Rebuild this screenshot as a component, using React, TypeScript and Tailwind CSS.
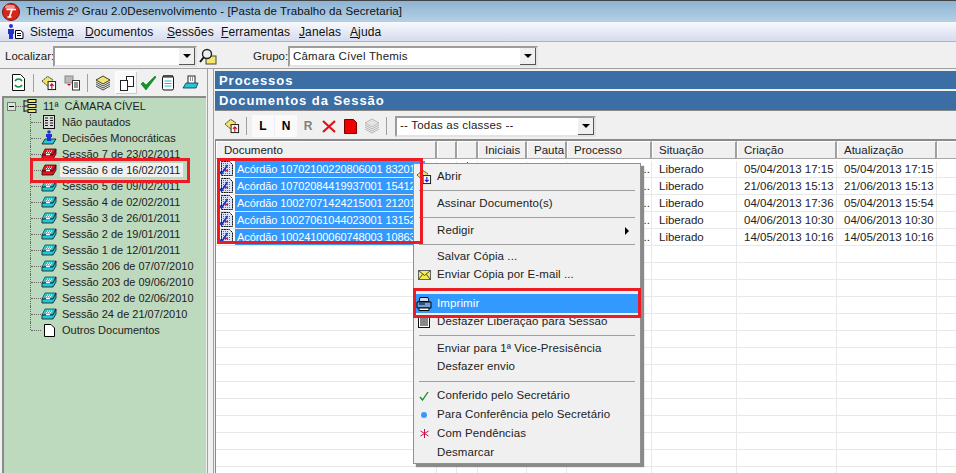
import React from 'react';

const treeFont = "font-['Liberation_Sans',sans-serif]";

function TitleLogo() {
  return (
    <svg width="18" height="18" viewBox="0 0 18 18">
      <circle cx="9" cy="9" r="8.500" fill="#d8261c" stroke="#7a1510" />
      <ellipse cx="8" cy="4" rx="5" ry="2.200" fill="#f2908a" />
      <path d="M4.500 6.500h9.500M10 6.500L7.500 14M5.500 14h4" stroke="#fff" strokeWidth="1.700" fill="none" />
    </svg>
  );
}

function MenuIcon() {
  return (
    <svg width="17" height="15" viewBox="0 0 17 15">
      <circle cx="4" cy="2" r="2" fill="#2233cc" />
      <path d="M1 5h6v5H6v5H2v-5H1z" fill="#2233cc" />
      <path d="M8.500 6.500h5l2.500 2v6h-7.500z" fill="#fff" stroke="#000" />
      <path d="M10 9.500h4M10 11.500h4" stroke="#000" />
    </svg>
  );
}

function Search() {
  return (
    <svg width="18" height="17" viewBox="0 0 18 17">
      <rect x="7" y="8" width="10" height="8" fill="#f5e66a" stroke="#444" />
      <circle cx="8" cy="6" r="4.500" fill="#eee" stroke="#222" strokeWidth="1.400" />
      <path d="M5 9L1 14" stroke="#111" strokeWidth="2" />
    </svg>
  );
}

function Tray({ red }: { red?: boolean }) {
  const top = red ? '#e8131c' : '#23c8d8';
  return (
    <svg width="16" height="12" viewBox="0 0 16 12">
      <path d="M4 1h11l-3 6H1z" fill={top} stroke={red ? '#700' : '#06565f'} strokeWidth="0.800" />
      <path d="M1 7h11l3-6v5l-3 5H1z" fill={top} stroke="#111" strokeWidth="0.800" />
      <path d="M5 6.500h4" stroke="#fff" strokeWidth="1.500" />
      <path d="M6 3h6M5 4.500h6" stroke="#fff" strokeDasharray="1 1" />
    </svg>
  );
}

function TreeIcon({ kind }: { kind: string }) {
  if (kind === 'list') {
    return (
      <svg width="14" height="14" viewBox="0 0 14 14">
        <rect x="1.500" y="0.500" width="11" height="13" fill="#ddd" stroke="#111" />
        <path d="M3 3h3M3 5.500h3M3 8h3M3 10.500h3M8 3h3M8 5.500h3M8 8h3M8 10.500h3" stroke="#111" strokeWidth="1.200" />
      </svg>
    );
  }
  if (kind === 'blue') {
    return (
      <svg width="16" height="16" viewBox="0 0 16 16">
        <circle cx="8" cy="2" r="1.800" fill="#2233cc" />
        <path d="M5 4h6v3H5z" fill="#2233cc" />
        <path d="M4 9h11l-3 5H1z" fill="#23c8d8" stroke="#111" strokeWidth="0.800" />
        <path d="M6 7h4v4H6z" fill="#2233cc" />
      </svg>
    );
  }
  if (kind === 'page') {
    return (
      <svg width="11" height="13" viewBox="0 0 11 13">
        <path d="M0.500 0.500h6.500l3.500 3.500v8.500h-10z" fill="#fff" stroke="#000" />
      </svg>
    );
  }
  return <Tray red={kind === 'red'} />;
}

function Stack() {
  return (
    <svg width="16" height="16" viewBox="0 0 16 16">
      <path d="M8 1l7 4-7 4-7-4z" fill="#f4e46a" stroke="#111" strokeWidth="0.800" />
      <path d="M1 7l7 4 7-4M1 9l7 4 7-4M1 11l7 4 7-4" fill="none" stroke="#333" strokeWidth="0.900" />
    </svg>
  );
}

function FolderUp({ down }: { down?: boolean }) {
  return (
    <svg width="16" height="16" viewBox="0 0 17 16">
      <path d="M1 6l6-5 5 3v3l-4 5z" fill="#f4e46a" stroke="#111" strokeWidth="0.800" strokeDasharray="2 0.500" />
      <rect x="7.500" y="6.500" width="8" height="8.500" fill="#fff" stroke="#111" />
      {down ? (
        <path d="M11.500 8v5M9.500 11l2 2 2-2" stroke="#1a2be0" strokeWidth="1.300" fill="none" />
      ) : (
        <path d="M11.500 14V9M9.500 11l2-2 2 2" stroke="#d01018" strokeWidth="1.300" fill="none" />
      )}
    </svg>
  );
}

function LeftToolbar() {
  return (
    <div className="h-[27px] flex items-center pl-[11px]">
      <svg width="15" height="17" viewBox="0 0 15 17">
        <path d="M1.500 0.500h8l4 4v12h-12z" fill="#fff" stroke="#111" />
        <path d="M4 7a4 4 0 0 1 7 0M11 11a4 4 0 0 1-7 0" stroke="#11913a" strokeWidth="1.600" fill="none" />
      </svg>
      <div className="w-px h-[18px] bg-[#a0a0a0] ml-[7px] mr-[7px]" />
      <FolderUp />
      <div className="w-[7px]" />
      <svg width="17" height="16" viewBox="0 0 17 16">
        <rect x="1" y="1" width="8" height="7" fill="#bbb" stroke="#888" />
        <path d="M3 9l2 2 2-2" fill="#d01018" />
        <rect x="8.500" y="5.500" width="7" height="9.500" fill="#fff" stroke="#333" />
        <path d="M10 8h4M10 10h4M10 12h4" stroke="#333" />
      </svg>
      <div className="w-px h-[18px] bg-[#a0a0a0] ml-[6px] mr-[7px]" />
      <Stack />
      <div className="w-[22px] h-[23px] ml-[4px] flex items-center justify-center bg-[#fafafa] border-t border-l border-white shadow-[inset_-1px_-1px_0_#ccc]">
        <svg width="14" height="15" viewBox="0 0 14 15">
          <rect x="6.500" y="0.500" width="7" height="10" fill="#fff" stroke="#222" />
          <rect x="0.500" y="4.500" width="7" height="10" fill="#fff" stroke="#222" />
        </svg>
      </div>
      <svg className="ml-[3px]" width="17" height="16" viewBox="0 0 17 16">
        <path d="M1 9l5 6L16 2l-1-1-9 9-3-3z" fill="#0c9a22" stroke="#056012" strokeWidth="0.500" />
      </svg>
      <svg className="ml-[4px]" width="14" height="17" viewBox="0 0 14 17">
        <rect x="1.500" y="2" width="11" height="14" rx="1.500" fill="#fff" stroke="#111" />
        <path d="M3 1v3M5 1v3M7 1v3M9 1v3M11 1v3" stroke="#111" />
        <path d="M3.500 7h7M3.500 9.500h7M3.500 12h7" stroke="#22b8d0" />
      </svg>
      <svg className="ml-[7px]" width="17" height="16" viewBox="0 0 17 16">
        <rect x="6" y="1" width="7" height="8" fill="#fff" stroke="#223" />
        <path d="M8 3h1M10 3h1M8 5h1M10 5h1" stroke="#223" />
        <path d="M4 8h12l-2 5H1z" fill="#23c8d8" stroke="#06353f" strokeWidth="0.800" />
      </svg>
    </div>
  );
}

const sessions = [
  ['Sessão 5 de 09/02/2011', 'tray'],
  ['Sessão 4 de 02/02/2011', 'tray'],
  ['Sessão 3 de 26/01/2011', 'tray'],
  ['Sessão 2 de 19/01/2011', 'tray'],
  ['Sessão 1 de 12/01/2011', 'tray'],
  ['Sessão 206 de 07/07/2010', 'tray'],
  ['Sessão 203 de 09/06/2010', 'tray'],
  ['Sessão 202 de 02/06/2010', 'tray'],
  ['Sessão 24 de 21/07/2010', 'tray'],
  ['Outros Documentos', 'page'],
];

function TreeRow({ label, kind, selected, last }: { label: string; kind: string; selected?: boolean; last?: boolean }) {
  return (
    <div className="h-[16px] flex items-center relative">
      <div className={`absolute left-[26px] top-0 w-0 border-l border-dotted border-[#666] ${last ? 'h-[8px]' : 'h-[16px]'}`} />
      <div className="w-[10px] ml-[27px] border-t border-dotted border-[#666]" />
      <div className="w-[16px] flex justify-center">
        <TreeIcon kind={kind} />
      </div>
      <span className={`ml-[3px] pl-[2px] pr-[3px] whitespace-nowrap h-[14px] leading-[14px] ${selected ? 'bg-[#f0f0f0]' : ''}`}>{label}</span>
    </div>
  );
}

function Tree() {
  return (
    <div className={`flex-1 ml-[2px] mr-[1px] border-l-2 border-t-2 border-[#8a8a8a] bg-[#bedabe] text-[11px] text-[#222] ${treeFont}`}>
      <div className="h-[16px] flex items-center relative">
        <div className="ml-[3px] w-[9px] h-[9px] border border-[#777] bg-[#d8e8d8] flex items-center justify-center">
          <div className="w-[5px] h-px bg-black" />
        </div>
        <div className="w-[7px] border-t border-dotted border-[#666]" />
        <svg width="14" height="14" viewBox="0 0 14 14">
          <path d="M1 1v12M1 2h5M1 7h5M1 12h5" stroke="#111" />
          <rect x="5" y="0.500" width="8" height="3" fill="#f4e46a" stroke="#111" />
          <rect x="5" y="5.500" width="8" height="3" fill="#f4e46a" stroke="#111" />
          <rect x="5" y="10.500" width="8" height="3" fill="#f4e46a" stroke="#111" />
        </svg>
        <span className="ml-[6px] whitespace-nowrap">11ª&nbsp; CÂMARA CÍVEL</span>
      </div>
      <TreeRow label="Não pautados" kind="list" />
      <TreeRow label="Decisões Monocráticas" kind="blue" />
      <TreeRow label="Sessão 7 de 23/02/2011" kind="red" />
      <TreeRow label="Sessão 6 de 16/02/2011" kind="red" selected />
      {sessions.map(([label, kind], i) => (
        <TreeRow key={label} label={label} kind={kind} last={i === sessions.length - 1} />
      ))}
    </div>
  );
}

const columns = [
  { name: 'Documento', w: 'w-[221px]' },
  { name: '', w: 'w-[20px]' },
  { name: '', w: 'w-[21px]' },
  { name: 'Iniciais', w: 'w-[49px]' },
  { name: 'Pauta', w: 'w-[40px]' },
  { name: 'Processo', w: 'w-[85px]' },
  { name: 'Situação', w: 'w-[85px]' },
  { name: 'Criação', w: 'w-[100px]' },
  { name: 'Atualização', w: 'w-[100px]' },
  { name: '', w: 'w-[21px]' },
];

const rows = [
  ['Acórdão 10702100220806001 832012', 'Liberado', '05/04/2013 17:15', '05/04/2013 17:15'],
  ['Acórdão 10702084419937001 154123', 'Liberado', '21/06/2013 15:13', '21/06/2013 15:13'],
  ['Acórdão 10027071424215001 212012', 'Liberado', '04/04/2013 17:36', '05/04/2013 15:54'],
  ['Acórdão 10027061044023001 131523', 'Liberado', '04/06/2013 10:30', '04/06/2013 10:30'],
  ['Acórdão 10024100060748003 108632', 'Liberado', '14/05/2013 10:16', '14/05/2013 10:16'],
];

function DocIcon() {
  return (
    <svg width="16" height="16" viewBox="0 0 16 16" className="shrink-0">
      <path d="M3.500 0.500h8l3 3v11h-11z" fill="#dbe6f8" stroke="#111" strokeDasharray="2 0.500" />
      <path d="M5 2.500h6M5 4.500h8M5 6.500h8M5 8.500h8M5 10.500h8M5 12.500h8" stroke="#3a6fd8" strokeDasharray="1 1" />
      <path d="M0.500 9l3 4 6-9" stroke="#1530b8" strokeWidth="1.600" fill="none" />
      <path d="M7 9l3 1" stroke="#d01040" strokeWidth="1.500" />
    </svg>
  );
}

function DocTable() {
  return (
    <div className="flex-1 overflow-hidden border-t-2 border-l border-[#8a8a8a] bg-white text-[11.500px] text-[#222] ml-px">
      <div className="flex h-[18px] bg-[#f0f0f0] border-b border-[#a8a8a8]">
        {columns.map((c, i) => (
          <div
            key={i}
            className={`${c.w} shrink-0 ${i === 0 ? 'pl-[7px]' : 'pl-[6px]'} leading-[17px] border-t border-l border-white border-r-2 border-r-[#a0a0a0] whitespace-nowrap overflow-hidden`}
          >
            {c.name}
          </div>
        ))}
      </div>
      <div className="h-[2px]" />
      {Array.from({ length: 19 }).map((_, r) => {
        const row = rows[r];
        return (
          <div key={r} className="flex h-[17px] border-b border-[#e8e8e8]">
            {columns.map((c, i) => (
              <div key={i} className={`${c.w} shrink-0 border-r border-[#e8e8e8] leading-[17px] whitespace-nowrap overflow-hidden ${i > 5 ? 'pl-[7px]' : ''}`}>
                {row && i === 0 && (
                  <div className="flex items-center pl-[2px]">
                    <DocIcon />
                    <span className="ml-[1px] pl-[2px] w-[190px] h-[16px] overflow-hidden bg-[#3399ff] text-white text-[11px] tracking-[-0.1px] leading-[16px]">{row[0]}</span>
                  </div>
                )}
                {row && r === 0 && i === 2 && (
                  <div className="flex justify-center pt-[1px]">
                    <svg width="9" height="9" viewBox="0 0 9 9">
                      <path d="M4.500 0.500L8 8H1z" fill="#f4e46a" stroke="#222" />
                    </svg>
                  </div>
                )}
                {row && i === 5 && <div className="text-right pr-[1px]">...</div>}
                {row && i === 6 && row[1]}
                {row && i === 7 && row[2]}
                {row && i === 8 && row[3]}
              </div>
            ))}
          </div>
        );
      })}
    </div>
  );
}

function MenuLine({ icon, label, hi, arrow, h = 'h-[19px]' }: { icon?: React.ReactNode; label: string; hi?: boolean; arrow?: boolean; h?: string }) {
  return (
    <div className={`flex items-center ${h} ${hi ? 'bg-[#3399ff] text-white' : 'text-[#222]'}`}>
      <div className="w-[21px] pr-[5px] shrink-0 flex justify-center">{icon}</div>
      <span className="tracking-[0.1px] whitespace-nowrap">{label}</span>
      {arrow && <div className="ml-auto mr-[9px] w-0 h-0 border-y-[4px] border-y-transparent border-l-[4px] border-l-black" />}
    </div>
  );
}

function Sep({ h = 'h-[8px]' }: { h?: string }) {
  return (
    <div className={`${h} flex items-center px-[3px]`}>
      <div className="h-px w-full bg-[#a0a0a0]" />
    </div>
  );
}

function ContextMenu() {
  return (
    <div className="absolute left-[413px] top-[163px] w-[228px] h-[301px] bg-[#f0f0f0] border border-[#909090] shadow-[3px_3px_1px_#8a8a8a] text-[11.500px] pt-[3px] px-[2px]">
      <MenuLine icon={<FolderUp down />} label="Abrir" />
      <Sep />
      <MenuLine label="Assinar Documento(s)" />
      <Sep />
      <MenuLine label="Redigir" arrow />
      <Sep />
      <MenuLine label="Salvar Cópia ..." h="h-[18px]" />
      <MenuLine
        h="h-[18px]"
        label="Enviar Cópia por E-mail ..."
        icon={
          <svg width="13" height="10" viewBox="0 0 13 10">
            <rect x="0.500" y="0.500" width="12" height="9" fill="#f4ec50" stroke="#666" />
            <path d="M0.500 0.500l6 5 6-5M0.500 9.500l4-5M12.500 9.500l-4-5" stroke="#444" fill="none" />
          </svg>
        }
      />
      <Sep h="h-[10px]" />
      <MenuLine
        hi
        label="Imprimir"
        icon={
          <svg width="16" height="14" viewBox="0 0 16 14" className="shrink-0">
            <path d="M4 0.500h8l1 4H3z" fill="#cfe2f8" stroke="#000" />
            <path d="M1 5h14v6H1z" fill="#6f9fd8" stroke="#000" />
            <path d="M3 11h10v2.500H3z" fill="#fff" stroke="#000" />
            <path d="M3 7h6" stroke="#000" />
          </svg>
        }
      />
      <MenuLine
        h="h-[18px]"
        label="Desfazer Liberação para Sessão"
        icon={
          <svg width="12" height="12" viewBox="0 0 12 12">
            <rect x="0.500" y="0.500" width="11" height="11" fill="#fff" stroke="#111" />
            <path d="M2 3h8M2 5h8M2 7h8M2 9h8" stroke="#111" />
          </svg>
        }
      />
      <Sep h="h-[9px]" />
      <MenuLine label="Enviar para 1ª Vice-Presisência" h="h-[18px]" />
      <MenuLine label="Desfazer envio" h="h-[18px]" />
      <Sep h="h-[10px]" />
      <MenuLine
        label="Conferido pelo Secretário"
        icon={
          <svg width="10" height="10" viewBox="0 0 10 10">
            <path d="M1 6l2.500 3L9 1" stroke="#0c8a22" strokeWidth="1.300" fill="none" />
          </svg>
        }
      />
      <MenuLine label="Para Conferência pelo Secretário" icon={<div className="w-[6px] h-[6px] rounded-full bg-[#3399ff]" />} />
      <MenuLine
        label="Com Pendências"
        icon={
          <svg width="9" height="9" viewBox="0 0 9 9">
            <path d="M4.500 0v9M0.500 2l8 5M8.500 2l-8 5" stroke="#c01050" />
          </svg>
        }
      />
      <MenuLine label="Desmarcar" />
    </div>
  );
}

function Combo({ label, w }: { label: string; w: string }) {
  return (
    <div className={`${w} h-[21px] flex items-center bg-white border-2 border-[#9c9c9c] border-b-[#e4e4e4] border-r-[#e4e4e4]`}>
      <span className="flex-1 pl-[3px] whitespace-nowrap tracking-[0.2px] text-[11.500px] text-[#222]">{label}</span>
      <div className="w-[16px] h-[17px] bg-[#f0f0f0] border-r border-b border-[#555] flex items-center justify-center">
        <div className="w-0 h-0 border-x-[4px] border-x-transparent border-t-[4px] border-t-black" />
      </div>
    </div>
  );
}

export default function App() {
  return (
    <div className={`relative w-[956px] h-[473px] overflow-hidden flex flex-col bg-[#f0f0f0] ${treeFont} text-[12px] text-[#222]`}>
      {/* Title bar */}
      <div className="h-[22px] shrink-0 flex items-center pl-[2px] border-t border-[#444] bg-gradient-to-b from-[#8fb3d3] to-[#b5d0e6]">
        <TitleLogo />
        <span className="ml-[6px] text-[11.500px] tracking-[0.1px] text-[#111]">Themis 2º Grau 2.0Desenvolvimento - [Pasta de Trabalho da Secretaria]</span>
      </div>

      {/* Menu */}
      <div className="h-[20px] shrink-0 flex items-center pl-[7px] border-b border-[#a8b4c8] bg-gradient-to-b from-[#f8f9fd] to-[#d6dcee]">
        <MenuIcon />
        <div className="flex text-[12px] text-[#111] ml-[6px] tracking-[0.1px]">
          <span className="w-[55px]">Siste<u>m</u>a</span>
          <span className="w-[82px]"><u>D</u>ocumentos</span>
          <span className="w-[54px]"><u>S</u>essões</span>
          <span className="w-[78px]"><u>F</u>erramentas</span>
          <span className="w-[51px]"><u>J</u>anelas</span>
          <span><u>A</u>juda</span>
        </div>
      </div>

      {/* Search bar */}
      <div className="h-[27px] shrink-0 flex items-center pl-[5px] pt-[3px] border-b border-[#a0a0a0] text-[11.500px]">
        <span className="w-[48px] whitespace-nowrap">Localizar:</span>
        <Combo label="" w="w-[144px]" />
        <div className="ml-[2px]"><Search /></div>
        <span className="ml-[36px] w-[35px]">Grupo:</span>
        <Combo label="Câmara Cível Themis" w="w-[250px]" />
      </div>

      <div className="flex-1 flex min-h-0">
        {/* Left */}
        <div className="w-[208px] shrink-0 flex flex-col border-r border-[#a0a0a0]">
          <LeftToolbar />
          <Tree />
        </div>
        <div className="w-[6px] shrink-0 border-r border-[#a0a0a0]" />

        {/* Right */}
        <div className="flex-1 flex flex-col min-w-0 pt-[2px]">
          <div className="h-[18px] ml-px bg-[#3a6ea5] text-white font-bold text-[13px] tracking-[0.95px] pl-[4px] leading-[19px]">Processos</div>
          <div className="h-[20px] ml-px mt-[2px] bg-[#3a6ea5] text-white font-bold text-[13px] tracking-[0.95px] pl-[4px] leading-[19px] border-b border-[#888]">Documentos da Sessão</div>
          <div className="h-[28px] shrink-0 flex items-center pl-[10px] pt-[2px]">
            <FolderUp />
            <div className="w-px h-[18px] bg-[#a0a0a0] ml-[6px] mr-[5px]" />
            <div className="w-[22px] h-[22px] bg-[#fafafa] flex items-center justify-center font-bold text-[12px] text-black">L</div>
            <div className="w-[22px] h-[22px] bg-[#fafafa] ml-px flex items-center justify-center font-bold text-[12px] text-black">N</div>
            <div className="w-[22px] flex justify-center font-bold text-[12px] text-[#808080]">R</div>
            <svg className="ml-[3px]" width="14" height="13" viewBox="0 0 14 13">
              <path d="M1 1l12 11M13 1L1 12" stroke="#e01018" strokeWidth="2.200" />
            </svg>
            <svg className="ml-[8px]" width="13" height="15" viewBox="0 0 13 15">
              <path d="M0.500 0.500h9l3 3v11h-12z" fill="#f00000" stroke="#700" />
            </svg>
            <svg className="ml-[7px]" width="16" height="16" viewBox="0 0 16 16">
              <path d="M8 1l7 4-7 4-7-4z" fill="#e4e4e4" stroke="#aaa" strokeWidth="0.800" />
              <path d="M1 7l7 4 7-4M1 9l7 4 7-4M1 11l7 4 7-4" fill="none" stroke="#aaa" strokeWidth="0.900" />
            </svg>
            <div className="w-px h-[18px] bg-[#a0a0a0] ml-[6px] mr-[8px]" />
            <Combo label="-- Todas as classes --" w="w-[201px]" />
          </div>
          <DocTable />
        </div>
      </div>

      <ContextMenu />

      {/* Annotations */}
      <div className="absolute left-[30px] top-[158px] w-[160px] h-[25px] border-[3px] border-[#ed1c24]" />
      <div className="absolute left-[217px] top-[158px] w-[206px] h-[86px] border-[3px] border-[#ed1c24]" />
      <div className="absolute left-[413px] top-[288px] w-[228px] h-[30px] border-[3px] border-[#ed1c24]" />
    </div>
  );
}
